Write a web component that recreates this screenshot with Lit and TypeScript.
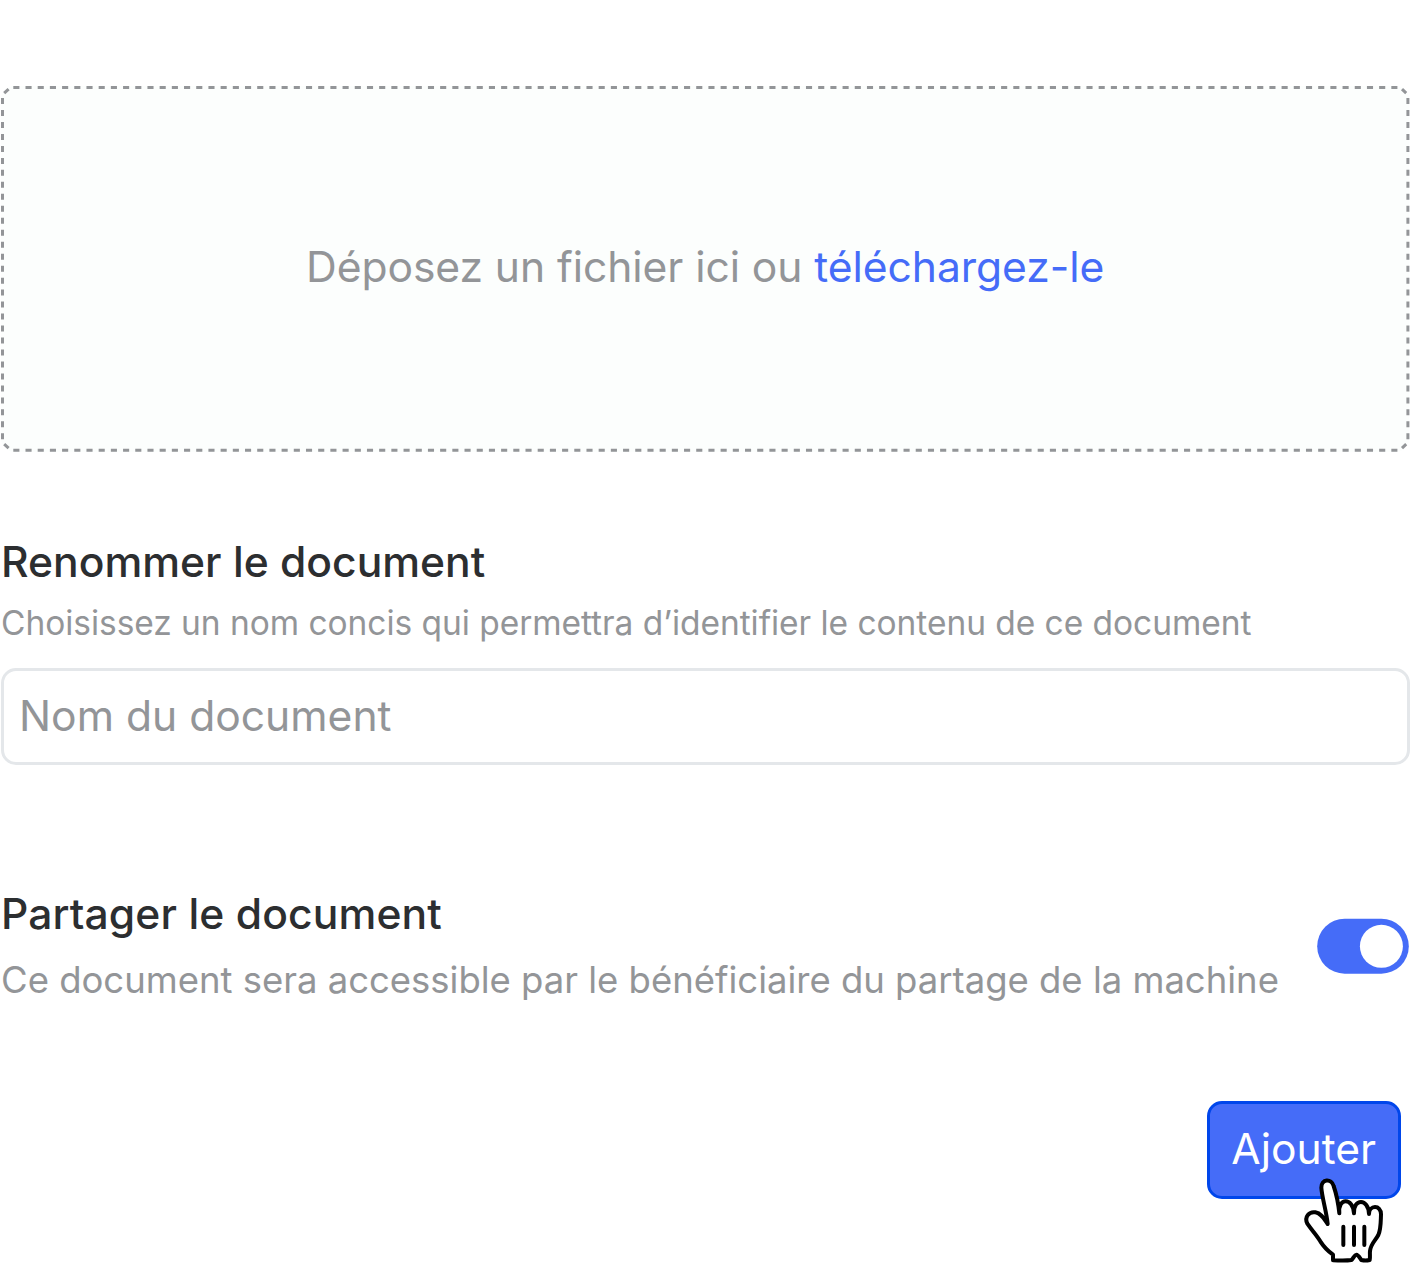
import { LitElement, html, css } from "lit";
import { customElement, property } from "lit/decorators.js";

@customElement("drop-zone")
class DropZone extends LitElement {
  static styles = css`
    :host {
      display: grid;
      width: 1410px;
      height: 370px;
    }
    .outline,
    .message {
      grid-area: 1 / 1;
    }
    .outline {
      display: block;
      width: 1410px;
      height: 370px;
    }
    .message {
      margin: 0;
      align-self: start;
      justify-self: start;
      padding: 157px 0 0 306px;
      font-size: 42.6px;
      line-height: 51px;
      letter-spacing: -0.07px;
      color: #939598;
      white-space: nowrap;
    }
    .link {
      color: #456cf8;
      text-decoration: none;
    }
    .fill {
      fill: #fcfefd;
    }
    .dash {
      fill: none;
      stroke: #939598;
      stroke-width: 3;
    }
    .horizontal {
      stroke-dasharray: 6.1 6.095;
    }
    .vertical {
      stroke-dasharray: 6 5.975;
    }
  `;
  render() {
    return html`
      <svg class="outline" viewBox="0 84 1410 370" aria-hidden="true">
        <rect class="fill" x="1" y="86" width="1408.3" height="366" rx="14" />
        <path class="dash horizontal" d="M13.3 87.4H1397.4M13.3 450.2H1397.4" />
        <path class="dash vertical" d="M2.5 98V439.5M1407.9 98V439.5" />
        <path class="dash" d="M4.2 93.2L8.6 89.2M1402 89.2L1406.2 93.2M4.2 444.2L8.6 448.2M1402 448.2L1406.2 444.2" />
      </svg>
      <p class="message">Déposez un fichier ici ou <a class="link">téléchargez-le</a></p>
    `;
  }
}

@customElement("toggle-switch")
class ToggleSwitch extends LitElement {
  static styles = css`
    :host {
      display: block;
      line-height: 0;
    }
    .track {
      fill: #456cf8;
    }
    .knob {
      fill: #fff;
    }
  `;
  @property({ type: Boolean }) checked = false;
  render() {
    return html`
      <svg width="93" height="56" viewBox="0 0 93 56" role="switch" aria-checked=${this.checked}>
        <rect class="track" x="0.2" y="0.7" width="91.6" height="55" rx="27.5" />
        <circle class="knob" cx=${this.checked ? 64.4 : 27.7} cy="28.3" r="21.5" />
      </svg>
    `;
  }
}

@customElement("hand-pointer")
class HandPointer extends LitElement {
  static styles = css`
    :host {
      display: block;
      line-height: 0;
      pointer-events: none;
    }
    .hand {
      fill: #fff;
      stroke: #000;
      stroke-width: 12;
      stroke-linejoin: round;
      stroke-linecap: round;
    }
  `;
  render() {
    return html`
      <svg width="100" height="97" viewBox="0 0 300 291" aria-hidden="true">
        <path
          class="hand"
          d="M98 162C95 126 81 84 79 53C79 26 109 24 116 48C124 72 130 100 133 130C128 82 174 82 177 130C175 84 220 84 222 132C222 105 258 103 258 133C257 157 258 177 250 195C241 212 227 222 225 243C224 253 226 261 224 270C216 272 207 272 199 270C194 263 190 254 184 254C178 254 175 266 169 270C151 273 131 271 114 271V254C96 241 86 230 76 214C65 195 49 179 37 161C27 140 43 124 61 127C80 130 88 148 98 162Z"
        />
        <path class="hand" d="M145 170V225M177 170V225M208 170V225" />
      </svg>
    `;
  }
}

@customElement("app-root")
class AppRoot extends LitElement {
  static styles = css`
    :host {
      display: block;
      box-sizing: border-box;
      width: 1410px;
      height: 1267px;
      padding-top: 84px;
      overflow: hidden;
      position: relative;
      background: #fff;
      font-family: Inter, "Liberation Sans", sans-serif;
      color: #2c2e30;
    }
    .field {
      display: flex;
      flex-direction: column;
      padding: 82px 0 0 1px;
    }
    .title {
      margin: 0;
      font-size: 42.6px;
      line-height: 51px;
      font-weight: 500;
      white-space: nowrap;
    }
    .share-title {
      letter-spacing: 0.09px;
    }
    .hint {
      margin: 0;
      color: #939598;
      white-space: nowrap;
    }
    .rename-hint {
      padding-top: 15px;
      font-size: 33.5px;
      line-height: 42px;
      letter-spacing: -0.045px;
    }
    .input {
      box-sizing: border-box;
      margin-top: 24px;
      width: 1409px;
      height: 97px;
      border: 3px solid #e4e7ea;
      border-radius: 15px;
      padding: 0 16px 3px 15px;
      background: #fff;
      font: inherit;
      font-size: 42.6px;
      color: #2c2e30;
    }
    .input::placeholder {
      color: #939598;
      opacity: 1;
    }
    .share {
      display: flex;
      justify-content: space-between;
      padding: 123px 0 0 1px;
    }
    .share-hint {
      padding-top: 18px;
      font-size: 36.5px;
      line-height: 46px;
      letter-spacing: -0.015px;
    }
    .switch {
      padding-top: 30px;
    }
    .actions {
      display: flex;
      justify-content: flex-end;
      padding: 98px 9px 0 0;
    }
    .submit {
      box-sizing: border-box;
      width: 194.5px;
      height: 98px;
      padding: 0 0 4px;
      border: 3px solid #0046eb;
      border-radius: 15px;
      background: #456cf8;
      color: #fff;
      font: inherit;
      font-size: 42.6px;
    }
    .pointer {
      position: absolute;
      left: 1295px;
      top: 1170px;
    }
  `;
  render() {
    return html`
      <drop-zone></drop-zone>
      <section class="field">
        <h2 class="title">Renommer le document</h2>
        <p class="hint rename-hint">Choisissez un nom concis qui permettra d’identifier le contenu de ce document</p>
        <input class="input" placeholder="Nom du document" />
      </section>
      <section class="share">
        <div>
          <h2 class="title share-title">Partager le document</h2>
          <p class="hint share-hint">Ce document sera accessible par le bénéficiaire du partage de la machine</p>
        </div>
        <toggle-switch class="switch" checked></toggle-switch>
      </section>
      <div class="actions"><button class="submit">Ajouter</button></div>
      <hand-pointer class="pointer"></hand-pointer>
    `;
  }
}
